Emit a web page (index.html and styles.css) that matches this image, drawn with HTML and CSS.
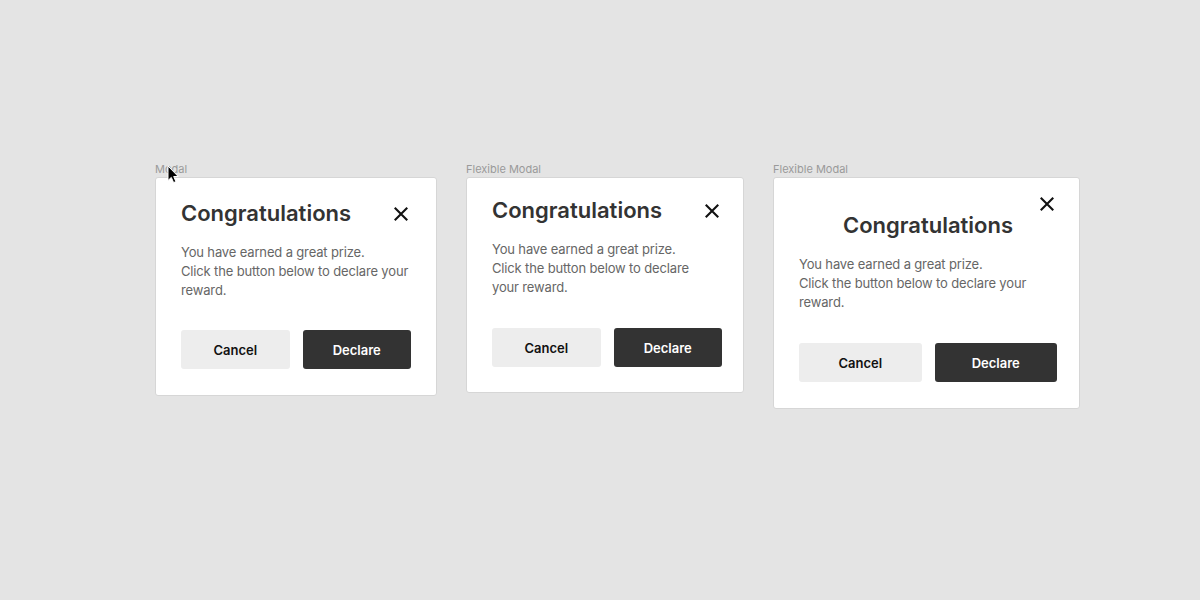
FILE: index.html
```html
<!DOCTYPE html>
<html>
<head>
<meta charset="utf-8">
<link rel="stylesheet" href="styles.css">
</head>
<body>
<div class="canvas">
  <div class="frame">
    <div class="label">Modal</div>
    <div class="modal modal-a">
      <div class="head">
        <h2 class="title">Congratulations</h2>
        <button class="close" aria-label="Close"><svg width="14" height="14" viewBox="0 0 14 14"><path d="M1.5 1.5 L12.5 12.5 M12.5 1.5 L1.5 12.5" stroke="#111" stroke-width="2.1" stroke-linecap="square"/></svg></button>
      </div>
      <p class="text">You have earned a great prize.<br>Click the button below to declare your reward.</p>
      <div class="actions">
        <button class="btn btn-cancel">Cancel</button>
        <button class="btn btn-primary">Declare</button>
      </div>
    </div>
  </div>

  <div class="frame">
    <div class="label">Flexible Modal</div>
    <div class="modal modal-b">
      <div class="head">
        <h2 class="title">Congratulations</h2>
        <button class="close" aria-label="Close"><svg width="14" height="14" viewBox="0 0 14 14"><path d="M1.5 1.5 L12.5 12.5 M12.5 1.5 L1.5 12.5" stroke="#111" stroke-width="2.1" stroke-linecap="square"/></svg></button>
      </div>
      <p class="text narrow">You have earned a great prize.<br>Click the button below to declare your reward.</p>
      <div class="actions">
        <button class="btn btn-cancel">Cancel</button>
        <button class="btn btn-primary">Declare</button>
      </div>
    </div>
  </div>

  <div class="frame">
    <div class="label">Flexible Modal</div>
    <div class="modal modal-c">
      <button class="close close-float" aria-label="Close"><svg width="14" height="14" viewBox="0 0 14 14"><path d="M1.5 1.5 L12.5 12.5 M12.5 1.5 L1.5 12.5" stroke="#111" stroke-width="2.1" stroke-linecap="square"/></svg></button>
      <h2 class="title centered">Congratulations</h2>
      <p class="text">You have earned a great prize.<br>Click the button below to declare your reward.</p>
      <div class="actions">
        <button class="btn btn-cancel">Cancel</button>
        <button class="btn btn-primary">Declare</button>
      </div>
    </div>
  </div>

  <svg class="cursor" width="13" height="19" viewBox="0 0 13 19"><path d="M1 1 L1 15.5 L4.3 12.4 L6.6 17.6 L8.9 16.6 L6.7 11.5 L11.2 11.5 Z" fill="#000" stroke="#fff" stroke-width="1" stroke-linejoin="round"/></svg>
</div>
</body>
</html>
```

FILE: styles.css
```css
* { box-sizing: border-box; }
html, body { margin: 0; padding: 0; }
body {
  background: #e4e4e4;
  font-family: Inter, "Noto Sans", "Liberation Sans", sans-serif;
  width: 1200px;
  height: 600px;
  overflow: hidden;
}
.canvas {
  position: relative;
  display: flex;
  align-items: flex-start;
  gap: 29px;
  padding: 163px 0 0 155px;
}
.frame {
  display: flex;
  flex-direction: column;
  gap: 1px;
}
.label {
  font-size: 11px;
  line-height: 13px;
  color: #9a9a9a;
}
.modal {
  position: relative;
  background: #fff;
  border: 1px solid #d6d6d6;
  border-radius: 3px;
  display: flex;
  flex-direction: column;
}
.modal-a { width: 282px; padding: 22px 25px 26px 25px; }
.modal-a .actions { margin-top: 30px; }
.modal-b { width: 278px; padding: 19px 21px 25px 25px; }
.modal-c { width: 307px; padding: 34px 22px 26px 25px; }
.head {
  display: flex;
  align-items: center;
  justify-content: space-between;
}
.title {
  margin: 0;
  font-size: 22px;
  line-height: 27px;
  font-weight: 600;
  color: #333;
}
.title.centered { text-align: center; }
.close {
  width: 24px;
  height: 24px;
  padding: 0;
  border: 0;
  background: none;
  display: flex;
  align-items: center;
  justify-content: center;
  margin-right: -2px;
}
.close-float {
  position: absolute;
  top: 14px;
  right: 22px;
}
.text {
  margin: 16px 0 0 0;
  font-size: 13px;
  line-height: 19px;
  letter-spacing: -0.15px;
  color: #666;
}
.text.narrow { max-width: 220px; }
.actions {
  display: flex;
  gap: 13px;
  margin-top: 31px;
}
.btn {
  flex: 1;
  height: 39px;
  border: 0;
  border-radius: 3px;
  font-family: Inter, "Noto Sans", "Liberation Sans", sans-serif;
  font-size: 13px;
  font-weight: 600;
}
.btn-cancel { background: #ededed; color: #111; }
.btn-primary { background: #333; color: #fff; }
.cursor {
  position: absolute;
  left: 167px;
  top: 165px;
}
```
